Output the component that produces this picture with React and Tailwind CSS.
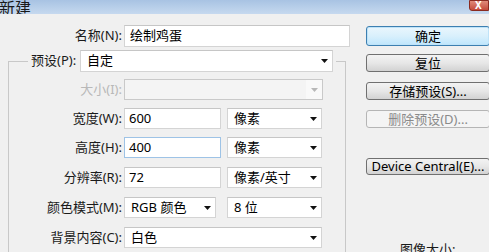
import React from "react";

function Arrow({ disabled }) {
  return (
    <svg width="7" height="4" viewBox="0 0 7 4" className="shrink-0">
      <path d="M0 0 L7 0 L3.5 4 Z" fill={disabled ? "#b8b8b8" : "#111"} />
    </svg>
  );
}

function Field({ className, focus, children }) {
  return (
    <div
      className={`h-full bg-white border flex items-center pl-[4px] text-black ${
        focus ? "border-[#9ec3e6]" : "border-[#d4d4d4] border-t-[#c6c6c6]"
      } ${className}`}
    >
      {children}
    </div>
  );
}

function Select({ className, children, disabled }) {
  return (
    <div
      className={`h-full border flex items-center justify-between pl-[6px] pr-[4px] ${
        disabled
          ? "bg-[#f4f4f4] border-[#c9c9c9] text-[#a0a0a0]"
          : "bg-white border-[#d4d4d4] border-t-[#c6c6c6] text-black"
      } ${className}`}
    >
      <span className="whitespace-nowrap">{children}</span>
      <Arrow disabled={disabled} />
    </div>
  );
}

function Button({ children, primary, disabled, className }) {
  let look =
    "border-[#707070] bg-gradient-to-b from-[#f3f3f3] via-[#e7e7e7] to-[#d2d2d2] text-black";
  if (primary)
    look =
      "border-[#3c7fb1] bg-gradient-to-b from-[#eaf6fd] via-[#d9f0fc] to-[#bee6fd] text-black shadow-[inset_0_0_0_1px_#bfe3f8]";
  if (disabled) look = "border-[#b5b5b5] bg-[#f4f4f4] text-[#8a8a8a]";
  return (
    <div
      className={`w-[124px] border rounded-[3px] flex items-center justify-center whitespace-nowrap leading-none ${look} ${className}`}
    >
      {children}
    </div>
  );
}

function Row({ label, disabled, className, children }) {
  return (
    <div className={`flex items-center h-[21px] gap-[2px] ${className}`}>
      <div
        className={`w-[113px] text-right whitespace-nowrap ${
          disabled ? "text-[#b8b8b8]" : "text-[#1a1a1a]"
        }`}
      >
        {label}
      </div>
      {children}
    </div>
  );
}

export default function App() {
  return (
    <div className="w-[489px] h-[252px] overflow-hidden bg-[#f0f0f0] text-[13px] font-['Noto_Sans','Noto_Sans_CJK_SC',sans-serif]">
      {/* title bar */}
      <div className="h-[14px] flex justify-between items-end overflow-hidden bg-gradient-to-b from-[#a8c3e3] to-[#c6d9ef]">
        <span className="text-[16px] leading-[18px] text-[#1a1a1a] -mb-[3px] -ml-[1px]">
          新建
        </span>
        <div className="self-start w-[20px] h-[11px] bg-gradient-to-b from-[#e08a7a] to-[#c4493a] border border-[#8a2a20] rounded-bl-[3px] text-white text-[10px] leading-[9px] pl-[5px] font-bold">
          X
        </div>
      </div>

      <div className="flex">
        {/* left side */}
        <div className="w-[366px] shrink-0">
          <div className="flex items-center h-[22px] mt-[11px] gap-[2px]">
            <div className="w-[122px] text-right text-[#1a1a1a]">名称(N):</div>
            <Field className="w-[226px] pl-[5px]">绘制鸡蛋</Field>
          </div>

          <fieldset className="ml-[8px] mt-[3px] w-[338px] h-[300px] border border-[#c8c8c8] p-0 m-0">
            <legend className="ml-[19px] px-[3px] flex items-center h-[22px]">
              <span className="w-[49px] text-[#1a1a1a] whitespace-nowrap">预设(P):</span>
              <Select className="w-[253px]">自定</Select>
            </legend>

            <Row label="大小(I):" disabled className="mt-[7px] h-[20px]">
              <div className="w-[199px] h-full border border-[#c9c9c9] bg-[#f4f4f4] flex justify-end">
                <div className="w-[16px] h-full bg-[#f9f9f9] flex items-center justify-center">
                  <Arrow disabled />
                </div>
              </div>
            </Row>

            <Row label="宽度(W):" className="mt-[8px]">
              <Field className="w-[97px]">600</Field>
              <Select className="w-[95px] ml-[4px]">像素</Select>
            </Row>

            <Row label="高度(H):" className="mt-[8px]">
              <Field className="w-[97px]" focus>
                400
              </Field>
              <Select className="w-[95px] ml-[4px]">像素</Select>
            </Row>

            <Row label="分辨率(R):" className="mt-[9px]">
              <Field className="w-[97px]">72</Field>
              <Select className="w-[95px] ml-[4px]">像素/英寸</Select>
            </Row>

            <Row label="颜色模式(M):" className="mt-[9px]">
              <Select className="w-[92px]">RGB 颜色</Select>
              <Select className="w-[95px] ml-[9px]">8 位</Select>
            </Row>

            <Row label="背景内容(C):" className="mt-[9px]">
              <Select className="w-[198px]">白色</Select>
            </Row>
          </fieldset>
        </div>

        {/* right side buttons */}
        <div className="w-[124px] shrink-0 flex flex-col">
          <Button primary className="mt-[12px] h-[20px]">
            确定
          </Button>
          <Button className="mt-[8px] h-[18px]">复位</Button>
          <Button className="mt-[10px] h-[18px]">存储预设(S)...</Button>
          <Button disabled className="mt-[10px] h-[18px]">
            删除预设(D)...
          </Button>
          <Button className="mt-[30px] h-[17px]">Device Central(E)...</Button>
          <div className="mt-[65px] pl-[34px] text-[#1a1a1a] whitespace-nowrap">图像大小:</div>
        </div>
      </div>
    </div>
  );
}
